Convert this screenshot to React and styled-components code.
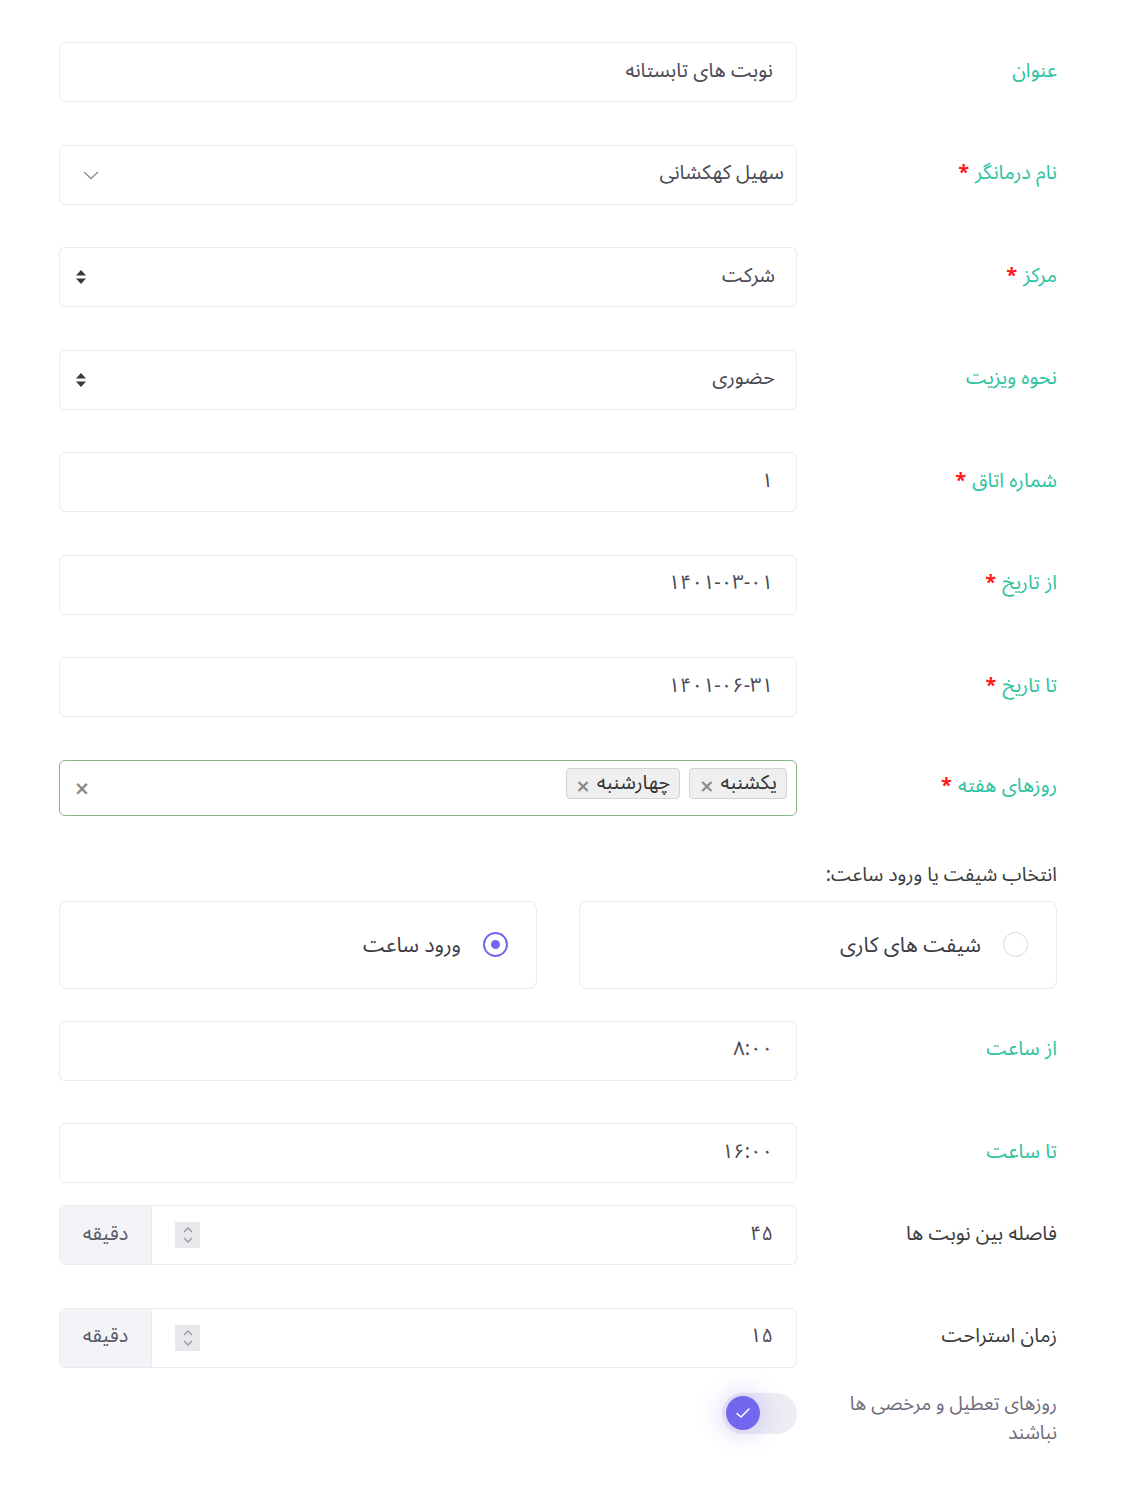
import React from "react";
import styled, { createGlobalStyle } from "styled-components";

const GlobalStyle = createGlobalStyle`
  body {
    margin: 0;
    background: #fff;
    font-family: "Noto Sans Arabic", "DejaVu Sans", "Noto Sans", sans-serif;
  }
  * { box-sizing: border-box; }
`;

const Form = styled.form`
  direction: rtl;
  width: 998px;
  margin: 42px 0 0 59px;
  padding-bottom: 40px;
`;

const Row = styled.div`
  display: grid;
  grid-template-columns: 260px 738px;
  align-items: ${(p) => (p.top ? "start" : "center")};
  margin-bottom: ${(p) => (p.gap !== undefined ? p.gap : 42.5)}px;
`;

const Label = styled.label`
  font-size: ${(p) => (p.muted ? 19 : 20)}px;
  color: ${(p) => (p.dark ? "#3b3b3b" : p.muted ? "#6e6b7b" : "#2fc39f")};
  line-height: ${(p) => (p.muted ? "29px" : "1.4")};
  padding-left: 40px;
  padding-bottom: ${(p) => (p.muted ? 0 : 3)}px;
`;

const Star = styled.span`
  color: #ff1a1a;
  margin-right: 6px;
  font-weight: bold;
`;

const Field = styled.div`
  height: ${(p) => p.h || 60}px;
  border: 1px solid ${(p) => (p.focus ? "#86b386" : "#ebeaf0")};
  border-radius: 6px;
  background: #fff;
  display: flex;
  align-items: center;
  padding: 0 ${(p) => p.pr || 23}px 0 ${(p) => p.pl || 20}px;
  font-size: 20px;
  color: #4a4a55;
`;

const Value = styled.span`
  flex: 1;
  direction: ${(p) => (p.ltr ? "ltr" : "rtl")};
  text-align: right;
  padding-bottom: 3px;
`;

const Tags = styled.div`
  flex: 1;
  display: flex;
  gap: 9px;
  align-self: flex-start;
  padding-top: 7px;
`;

const Tag = styled.span`
  display: inline-flex;
  align-items: center;
  gap: 6px;
  height: 31px;
  padding: 0 9px;
  background: #efefef;
  border: 1px solid #d4d4d4;
  border-radius: 4px;
  color: #333;
  font-size: 20px;
`;

const TagX = styled.span`
  color: #8a8a8a;
  font-size: 18px;
  font-weight: bold;
  font-family: "DejaVu Sans", sans-serif;
  line-height: 1;
  margin-top: 5px;
`;

const Clear = styled.span`
  color: #8a8a8a;
  font-size: 19px;
  font-weight: bold;
  font-family: "DejaVu Sans", sans-serif;
`;

const Section = styled.div`
  font-size: 19.5px;
  line-height: 28px;
  color: #3b3b3b;
  margin: 45px 0 12px;
`;

const Cards = styled.div`
  display: grid;
  grid-template-columns: 1fr 1fr;
  gap: 42px;
  margin-bottom: 32px;
`;

const Card = styled.div`
  height: 88px;
  border: 1px solid #ebeaf0;
  border-radius: 8px;
  display: flex;
  align-items: center;
  gap: 22px;
  padding-right: 28px;
  font-size: 21px;
  color: #3b3b45;
`;

const Radio = styled.span`
  width: 25px;
  height: 25px;
  border-radius: 50%;
  border: ${(p) => (p.checked ? 2 : 1)}px solid ${(p) => (p.checked ? "#7367f0" : "#d8d6e4")};
  display: flex;
  align-items: center;
  justify-content: center;
  &::after {
    content: "";
    width: 9px;
    height: 9px;
    border-radius: 50%;
    background: ${(p) => (p.checked ? "#7367f0" : "transparent")};
  }
`;

const Group = styled.div`
  height: 60px;
  display: flex;
  border: 1px solid #ebeaf0;
  border-radius: 6px;
  overflow: hidden;
  font-size: 20px;
  color: #4a4a55;
`;

const GroupInput = styled.div`
  flex: 1;
  display: flex;
  align-items: center;
  padding: 0 23px;
`;

const Spinner = styled.span`
  width: 25px;
  height: 26px;
  background: #e7e7ec;
  display: flex;
  align-items: center;
  justify-content: center;
`;

const Addon = styled.div`
  width: 92px;
  background: #f3f4f8;
  border-right: 1px solid #ebeaf0;
  display: flex;
  align-items: center;
  justify-content: center;
  padding-bottom: 3px;
  color: #5a5a66;
`;

const SwitchWrap = styled.div`
  display: flex;
  justify-content: flex-start;
  padding-top: 3px;
`;

const Track = styled.div`
  width: 75px;
  height: 41px;
  border-radius: 21px;
  background: #ededf3;
  display: flex;
  align-items: center;
  justify-content: flex-end;
  padding: 0 4px;
`;

const Knob = styled.span`
  width: 34px;
  height: 34px;
  border-radius: 50%;
  background: #7367f0;
  display: flex;
  align-items: center;
  justify-content: center;
  box-shadow: 0 0 22px 6px rgba(115, 103, 240, 0.22);
`;

const Chevron = () => (
  <svg width="16" height="10" viewBox="0 0 16 10">
    <polyline points="1,2 8,8.5 15,2" fill="none" stroke="#8e8c9c" strokeWidth="1.3" />
  </svg>
);

const Carets = () => (
  <svg width="12" height="16" viewBox="0 0 12 16">
    <polygon points="6,1 11,6.5 1,6.5" fill="#3a3a3a" />
    <polygon points="6,15 11,9.5 1,9.5" fill="#3a3a3a" />
  </svg>
);

const SpinIcon = () => (
  <svg width="12" height="20" viewBox="0 0 12 20">
    <polyline points="2,7 6,3 10,7" fill="none" stroke="#9a99a6" strokeWidth="1.4" />
    <polyline points="2,13 6,17 10,13" fill="none" stroke="#9a99a6" strokeWidth="1.4" />
  </svg>
);

const Check = () => (
  <svg width="16" height="12" viewBox="0 0 16 12">
    <polyline points="2,6.5 6,10 14,2" fill="none" stroke="#fff" strokeWidth="1.6" strokeLinecap="round" strokeLinejoin="round" />
  </svg>
);

const Req = ({ children }) => (
  <Label>
    {children}
    <Star>*</Star>
  </Label>
);

const App = () => (
  <>
    <GlobalStyle />
    <Form>
      <Row>
        <Label>عنوان</Label>
        <Field>
          <Value>نوبت های تابستانه</Value>
        </Field>
      </Row>
      <Row>
        <Req>نام درمانگر</Req>
        <Field pr={12} pl={23}>
          <Value>سهیل کهکشانی</Value>
          <Chevron />
        </Field>
      </Row>
      <Row>
        <Req>مرکز</Req>
        <Field pr={21} pl={15}>
          <Value>شرکت</Value>
          <Carets />
        </Field>
      </Row>
      <Row>
        <Label>نحوه ویزیت</Label>
        <Field pr={21} pl={15}>
          <Value>حضوری</Value>
          <Carets />
        </Field>
      </Row>
      <Row>
        <Req>شماره اتاق</Req>
        <Field>
          <Value>۱</Value>
        </Field>
      </Row>
      <Row>
        <Req>از تاریخ</Req>
        <Field>
          <Value ltr>۱۴۰۱-۰۳-۰۱</Value>
        </Field>
      </Row>
      <Row>
        <Req>تا تاریخ</Req>
        <Field>
          <Value ltr>۱۴۰۱-۰۶-۳۱</Value>
        </Field>
      </Row>
      <Row gap={0}>
        <Req>روزهای هفته</Req>
        <Field h={56} focus pr={9} pl={14}>
          <Tags>
            <Tag>
              یکشنبه<TagX>×</TagX>
            </Tag>
            <Tag>
              چهارشنبه<TagX>×</TagX>
            </Tag>
          </Tags>
          <Clear>×</Clear>
        </Field>
      </Row>

      <Section>انتخاب شیفت یا ورود ساعت:</Section>
      <Cards>
        <Card>
          <Radio />
          شیفت های کاری
        </Card>
        <Card>
          <Radio checked />
          ورود ساعت
        </Card>
      </Cards>

      <Row>
        <Label>از ساعت</Label>
        <Field>
          <Value>۸:۰۰</Value>
        </Field>
      </Row>
      <Row gap={22}>
        <Label>تا ساعت</Label>
        <Field>
          <Value>۱۶:۰۰</Value>
        </Field>
      </Row>
      <Row>
        <Label dark>فاصله بین نوبت ها</Label>
        <Group>
          <GroupInput>
            <Value>۴۵</Value>
            <Spinner>
              <SpinIcon />
            </Spinner>
          </GroupInput>
          <Addon>دقیقه</Addon>
        </Group>
      </Row>
      <Row gap={22}>
        <Label dark>زمان استراحت</Label>
        <Group>
          <GroupInput>
            <Value>۱۵</Value>
            <Spinner>
              <SpinIcon />
            </Spinner>
          </GroupInput>
          <Addon>دقیقه</Addon>
        </Group>
      </Row>
      <Row top>
        <Label muted>روزهای تعطیل و مرخصی ها نباشند</Label>
        <SwitchWrap>
          <Track>
            <Knob>
              <Check />
            </Knob>
          </Track>
        </SwitchWrap>
      </Row>
    </Form>
  </>
);

export default App;
